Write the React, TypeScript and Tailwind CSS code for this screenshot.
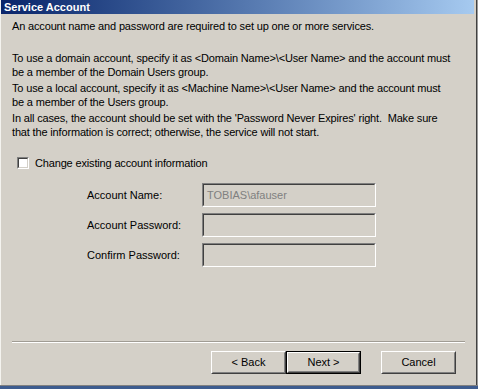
import React from "react";

const font = { fontFamily: '"Liberation Sans", Arial, sans-serif' };

const Field: React.FC<{ label: string; value?: string }> = ({ label, value }) => (
  <div className="flex items-center h-[24px]">
    <span className="w-[115px] text-[11px] text-black">{label}</span>
    <div className="w-[174px] h-[24px] border border-t-[#808080] border-l-[#808080] border-b-white border-r-white">
      <div className="h-full w-full border border-t-[#404040] border-l-[#404040] border-b-[#d4d0c8] border-r-[#d4d0c8] bg-[#d4d0c8] flex items-center px-[3px] text-[11px] text-[#808080]">
        {value}
      </div>
    </div>
  </div>
);

const Button: React.FC<{ label: string; primary?: boolean }> = ({ label, primary }) => (
  <div className={`h-[23px] w-[75px] ${primary ? "border border-black" : ""}`}>
    <div className="h-full w-full border border-t-white border-l-white border-b-[#404040] border-r-[#404040] bg-[#d4d0c8]">
      <div className="h-full w-full border border-t-[#d4d0c8] border-l-[#d4d0c8] border-b-[#808080] border-r-[#808080] flex items-center justify-center text-[11px] text-black">
        {label}
      </div>
    </div>
  </div>
);

export default function App() {
  return (
    <div style={font} className="w-[478px] h-[389px] overflow-hidden flex flex-col bg-[#d4d0c8]">
      <div className="flex flex-1 min-h-0">
        <div className="flex-1 flex flex-col border-l border-l-[#f4f3ef]">
          {/* Title */}
          <div className="h-[14px] mr-[2px] bg-gradient-to-r from-[#0a246a] to-[#a6caf0] flex items-center pl-[3px] text-[11px] font-bold text-white leading-none">
            Service Account
          </div>

          {/* Body */}
          <div className="pl-[11px] pr-[8px] text-[11px] leading-[14px] tracking-[-0.16px] text-black whitespace-nowrap">
            <p className="mt-[5px]">An account name and password are required to set up one or more services.</p>
            <p className="mt-[18px]">
              To use a domain account, specify it as &lt;Domain Name&gt;\&lt;User Name&gt; and the account must
              <br />
              be a member of the Domain Users group.
            </p>
            <p className="mt-[2px]">
              To use a local account, specify it as &lt;Machine Name&gt;\&lt;User Name&gt; and the account must
              <br />
              be a member of the Users group.
            </p>
            <p className="mt-[2px]">
              In all cases, the account should be set with the 'Password Never Expires' right.&nbsp; Make sure
              <br />
              that the information is correct; otherwise, the service will not start.
            </p>

            <div className="flex items-center mt-[17px] ml-[5px] gap-[6px]">
              <div className="w-[12px] h-[12px] border border-t-[#808080] border-l-[#808080] border-b-white border-r-white">
                <div className="w-full h-full border border-t-[#404040] border-l-[#404040] border-b-[#d4d0c8] border-r-[#d4d0c8] bg-white" />
              </div>
              <span>Change existing account information</span>
            </div>

            <div className="ml-[75px] mt-[13px] flex flex-col gap-[6px] tracking-normal">
              <Field label="Account Name:" value="TOBIAS\afauser" />
              <Field label="Account Password:" />
              <Field label="Confirm Password:" />
            </div>
          </div>

          <div className="flex-1" />

          {/* Separator */}
          <div className="ml-[11px] mr-[11px] border-t border-t-[#a09c94] border-b border-b-white" />

          {/* Buttons */}
          <div className="flex justify-end mt-[8px] mb-[11px] mr-[20px]">
            <Button label="< Back" />
            <Button label="Next >" primary />
            <div className="w-[20px]" />
            <Button label="Cancel" />
          </div>
        </div>
        <div className="w-[2px] bg-[#404040] border-r border-r-[#9a9a9a]" />
      </div>
      <div className="h-[1px] bg-[#808080]" />
      <div className="h-[3px] bg-[#3d5c8f]" />
    </div>
  );
}
